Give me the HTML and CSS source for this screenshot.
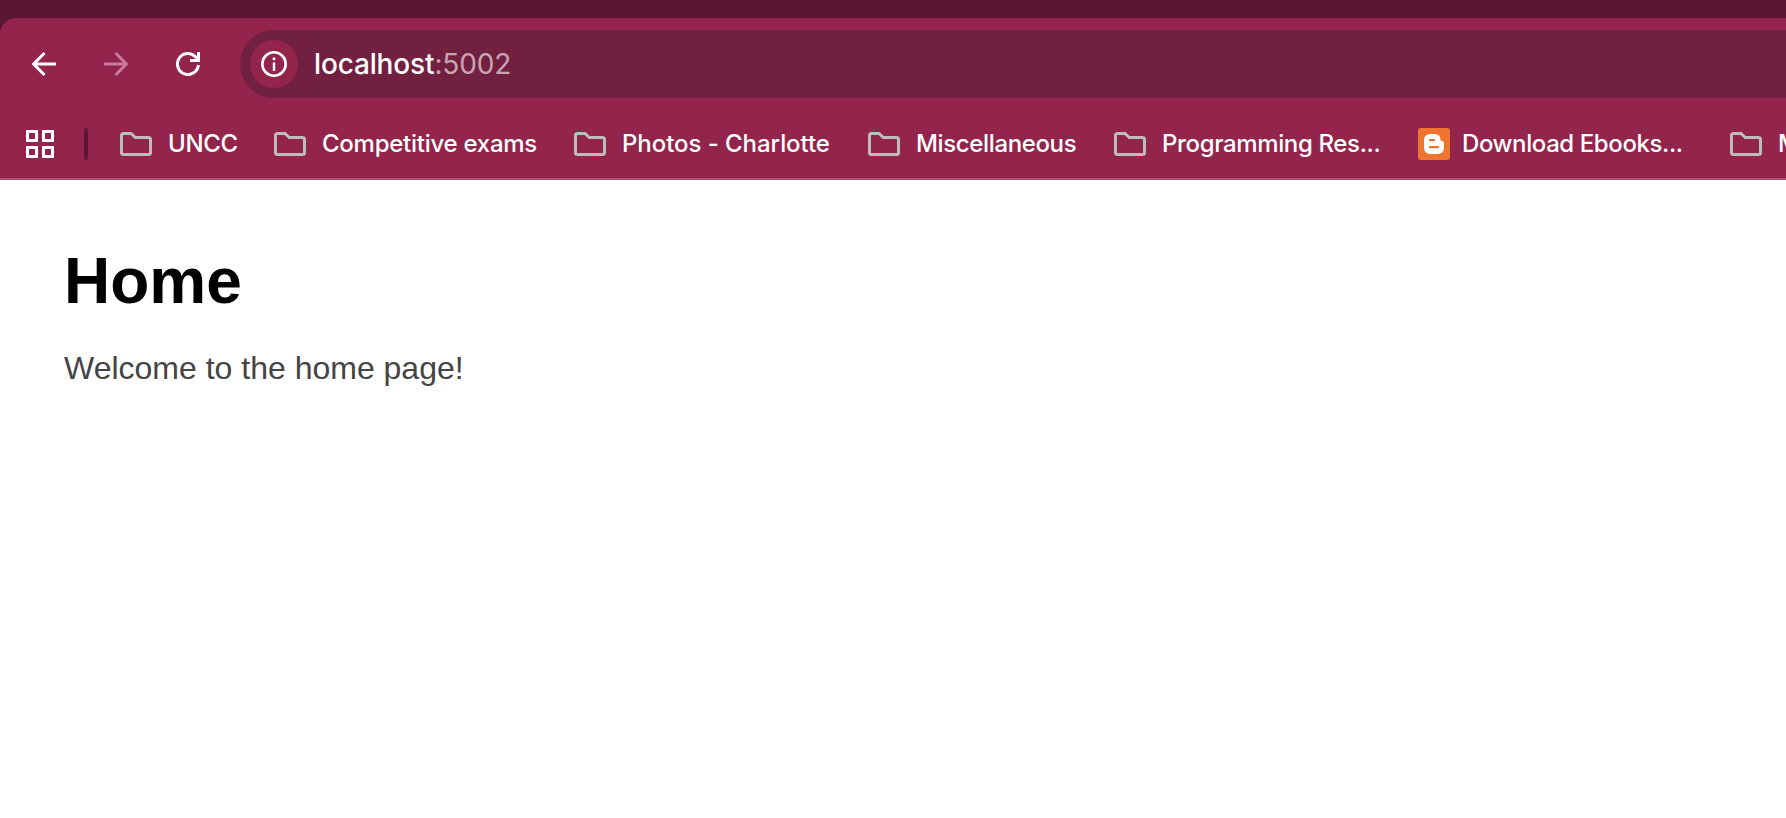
FILE: index.html
```html
<!DOCTYPE html>
<html lang="en">
<head>
<meta charset="utf-8">
<title>Home</title>
<link rel="stylesheet" href="styles.css">
</head>
<body>
<svg width="0" height="0" class="defs" aria-hidden="true">
  <symbol id="folder" viewBox="0 0 32 24"><path d="M1.5 3.5Q1.5 1.5 3.5 1.5H11L15.3 5.5H28.5Q30.5 5.5 30.5 7.5V20.5Q30.5 22.5 28.5 22.5H3.5Q1.5 22.5 1.5 20.5Z" fill="none" stroke="#bdbdbd" stroke-width="3"/></symbol>
</svg>
<div class="browser">
  <header class="chrome">
    <div class="toolbar">
      <svg class="nav" viewBox="0 0 24 24"><path d="M24 12H2M12.5 1L1.6 12L12.5 23" fill="none" stroke="#fff" stroke-width="2.9"/></svg>
      <svg class="nav nav-off" viewBox="0 0 24 24"><path d="M0 12H22M11.5 1L22.4 12L11.5 23" fill="none" stroke="#c97d9b" stroke-width="2.9"/></svg>
      <svg class="nav" viewBox="0 0 24 24"><path d="M22.4 13A10.5 10.5 0 1 1 19.4 4.6L22 7.6" fill="none" stroke="#fff" stroke-width="3"/><path d="M21 0H24V10H14V7H21Z" fill="#fff"/></svg>
      <div class="omnibox">
        <span class="site-info"><svg width="26" height="26" viewBox="0 0 26 26"><circle cx="13" cy="13" r="11.7" fill="none" stroke="#fff" stroke-width="2.6"/><path d="M13 11.5V20" stroke="#fff" stroke-width="2.4"/><circle cx="13" cy="7.7" r="1.5" fill="#fff"/></svg></span>
        <span class="url">localhost<span class="port">:5002</span></span>
      </div>
    </div>
    <nav class="bookmarks">
      <svg class="apps" viewBox="0 0 28 28"><path d="M1.5 1.5H10.5V10.5H1.5ZM17.5 1.5H26.5V10.5H17.5ZM1.5 17.5H10.5V26.5H1.5ZM17.5 17.5H26.5V26.5H17.5Z" fill="none" stroke="#fff" stroke-width="3"/></svg>
      <span class="divider"></span>
      <a class="bookmark uncc"><svg class="folder"><use href="#folder"/></svg><span>UNCC</span></a>
      <a class="bookmark exams"><svg class="folder"><use href="#folder"/></svg><span>Competitive exams</span></a>
      <a class="bookmark photos"><svg class="folder"><use href="#folder"/></svg><span>Photos - Charlotte</span></a>
      <a class="bookmark misc"><svg class="folder"><use href="#folder"/></svg><span>Miscellaneous</span></a>
      <a class="bookmark programming"><svg class="folder"><use href="#folder"/></svg><span>Programming Res...</span></a>
      <a class="bookmark ebooks"><svg class="blogger" viewBox="0 0 32 32"><rect width="32" height="32" rx="3" fill="#ef7430"/><path d="M12.5 6H16.5Q22.5 6 22.5 12Q22.5 13 24 13Q26 13 26 15V19.5Q26 26 19.5 26H12.5Q6 26 6 19.5V12.5Q6 6 12.5 6Z" fill="#fff"/><path d="M12 12.2H16M12 19.2H20" stroke="#ef7430" stroke-width="2.2" stroke-linecap="round"/></svg><span>Download Ebooks...</span></a>
      <a class="bookmark"><svg class="folder"><use href="#folder"/></svg><span>M</span></a>
    </nav>
  </header>
  <main class="page">
    <h1 class="title">Home</h1>
    <p class="welcome">Welcome to the home page!</p>
  </main>
</div>
</body>
</html>
```
FILE: styles.css
```css
body { margin: 0; background: #fff; overflow: hidden; }
.defs { display: none; }
.browser { display: flex; flex-direction: column; height: 818px; overflow: hidden; }
.chrome { background: linear-gradient(#5b1632, #5b1632) top / 100% 40px no-repeat; padding-top: 18px; font-family: Inter, sans-serif; color: #fff; }
.toolbar { display: flex; align-items: center; height: 68px; padding: 12px 0 10px 32px; background: #93254d; border-top-left-radius: 16px; }
.nav { flex: none; width: 24px; height: 24px; margin-right: 48px; }
.nav + .nav + .nav { margin-right: 40px; }
.omnibox { flex: 1; display: flex; align-items: center; height: 68px; padding-left: 10px; background: #712040; border-radius: 34px 0 0 34px; }
.site-info { display: flex; align-items: center; justify-content: center; width: 48px; height: 48px; border-radius: 50%; background: #93254d; }
.url { margin-left: 16px; font-size: 28px; line-height: 40px; font-weight: 500; letter-spacing: -0.15px; white-space: nowrap; }
.port { color: #c9a5b4; font-weight: 400; }
.bookmarks { display: flex; align-items: center; height: 68px; padding: 2px 0 0 26px; background: #93254d; border-bottom: 2px solid #a85073; overflow: hidden; }
.apps { flex: none; width: 28px; height: 28px; }
.divider { flex: none; width: 4px; height: 32px; margin: 0 32px 0 30px; border-radius: 2px; background: #5b1632; }
.bookmark { flex: none; display: flex; align-items: center; gap: 16px; font-size: 24px; line-height: 32px; font-weight: 500; white-space: nowrap; }
.folder { flex: none; width: 32px; height: 24px; }
.blogger { flex: none; width: 32px; height: 32px; }
.uncc { width: 154px; letter-spacing: -0.3px; }
.exams { width: 300px; letter-spacing: -0.26px; }
.photos { width: 294px; letter-spacing: -0.06px; }
.misc { width: 246px; letter-spacing: -0.36px; }
.programming { width: 304px; letter-spacing: -0.36px; }
.ebooks { width: 312px; gap: 12px; letter-spacing: -0.4px; }
.page { flex: 1; padding: 0 64px; font-family: "Liberation Sans", Arial, sans-serif; }
.title { margin: 64px 0 0; font-size: 64px; line-height: 74px; color: #000; }
.welcome { margin: 32px 0 0; font-size: 32px; line-height: 36px; color: #444; }
```
